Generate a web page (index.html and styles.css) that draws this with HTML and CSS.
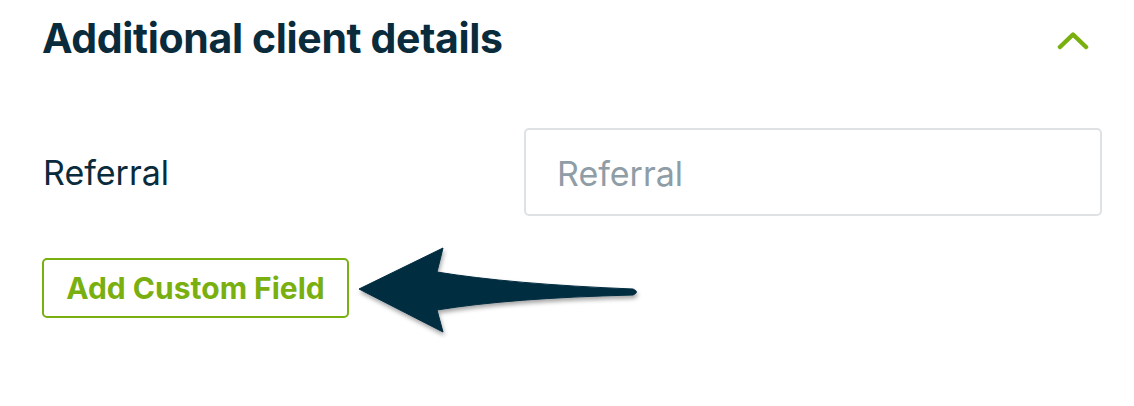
FILE: index.html
```html
<!DOCTYPE html>
<html lang="en">
	<head>
		<meta charset="utf-8">
		<title>Additional client details</title>
		<link rel="stylesheet" href="styles.css">
	</head>
	<body>
		<section class="panel">
			<div class="panel-head">
				<h2>Additional client details</h2>
				<svg class="chevron" width="32" height="20" viewBox="0 0 32 20">
					<path d="M3 16 L16 3.5 L29 16" fill="none" stroke="#7aaf10" stroke-width="4.5" stroke-linecap="round" stroke-linejoin="round"/>
				</svg>
			</div>

			<div class="field-row">
				<label for="referral">Referral</label>
				<input type="text" id="referral" placeholder="Referral">
			</div>

			<button class="add-field">Add Custom Field</button>

			<svg class="arrow" width="300" height="100" viewBox="0 0 300 100">
				<defs>
					<filter id="shadow" x="-10%" y="-20%" width="120%" height="150%">
						<feDropShadow dx="1" dy="3" stdDeviation="2" flood-color="#000" flood-opacity="0.35"/>
					</filter>
				</defs>
				<path d="M 9 49 L 93 8 L 87 32 Q 160 44 283 49 Q 290 52 283 55 Q 160 58 87 70 L 93 92 Z" fill="#022d40" filter="url(#shadow)" stroke="#022d40" stroke-width="1" stroke-linejoin="round"/>
			</svg>
		</section>
	</body>
</html>
```

FILE: styles.css
```css
body {
	margin: 0;
	background-color: #fff;
	font-family: Inter, "Noto Sans", sans-serif;
	color: #0a2b3b;
}
.panel {
	position: relative;
	padding: 0 32px 0 42px;
	height: 406px;
}
.panel-head {
	display: flex;
	justify-content: space-between;
	align-items: center;
	padding-top: 13px;
	height: 50px;
}
h2 {
	margin: 0;
	font-size: 41px;
	font-weight: 700;
	letter-spacing: -0.35px;
}
.chevron {
	margin-right: 13px;
	margin-top: 6px;
}
.field-row {
	display: flex;
	justify-content: space-between;
	align-items: center;
	margin-top: 65px;
	padding-left: 1px;
}
label {
	font-size: 34px;
}
input {
	width: 578px;
	height: 88px;
	box-sizing: border-box;
	border: 2px solid #dfe2e5;
	border-radius: 5px;
	padding: 2px 31px 0;
	font-family: Inter, sans-serif;
	font-size: 34px;
	color: #0a2b3b;
}
input::placeholder {
	color: #8e9da6;
}
.add-field {
	margin-top: 42px;
	width: 307px;
	height: 60px;
	background: #fff;
	border: 2px solid #7aaf10;
	border-radius: 5px;
	font-family: Inter, sans-serif;
	font-size: 30px;
	font-weight: 700;
	color: #7aaf10;
	padding: 0;
}
.arrow {
	position: absolute;
	left: 350px;
	top: 240px;
}
```
